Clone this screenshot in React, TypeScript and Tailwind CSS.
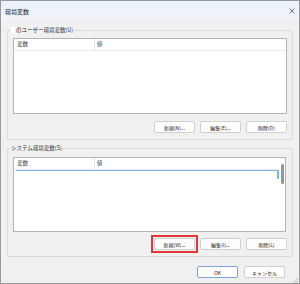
import React from "react";

const font = { fontFamily: '"Noto Sans CJK JP", "Noto Sans", sans-serif' };

function Btn({ label, focus, primary }: { label: string; focus?: boolean; primary?: boolean }) {
  const button = (
    <button
      className={
        "w-[41px] h-[12px] rounded-[2px] bg-[#fdfdfd] border text-[5px] leading-none text-[#222] flex items-center justify-center " +
        (primary ? "border-[#7fa6d6]" : "border-[#d0d0d0]")
      }
    >
      {label}
    </button>
  );
  if (!focus) return button;
  // red highlight frame around the button
  return <span className="-m-[3px] p-[1px] border-2 border-[#e2383a] flex">{button}</span>;
}

function ListHeader() {
  return (
    <div className="h-[12px] flex items-center border-b border-[#e8e8e8] text-[5.5px] text-[#333] shrink-0">
      <div className="w-[81px] pl-[3px] border-r border-[#e5e5e5] h-full flex items-center">変数</div>
      <div className="pl-[2px]">値</div>
    </div>
  );
}

function Group({
  legend,
  masked,
  children,
}: {
  legend: string;
  masked?: boolean;
  children: React.ReactNode;
}) {
  return (
    <fieldset className="border border-[#dcdcdc] px-[5px] pb-[6px] rounded-[1px]">
      <legend className="-ml-[3px] px-[1px] h-[10px] leading-[10px] text-[5.5px] text-[#333] flex items-center">
        {masked && <span className="inline-block w-[4px] h-[7px] bg-white mr-[1px]" />}
        {legend}
      </legend>
      {children}
    </fieldset>
  );
}

export default function App() {
  return (
    <div className="w-[300px] h-[284px] bg-[#f0f0f0] border border-[#9a9a9a] flex flex-col" style={font}>
      {/* Title bar */}
      <div className="h-[20px] bg-gradient-to-b from-[#eaf1fa] to-[#f1f4f8] flex items-center justify-between pl-[4px] pr-[4px] shrink-0">
        <span className="text-[6px] text-[#222]">環境変数</span>
        <svg width="6" height="6" viewBox="0 0 6 6">
          <path d="M0.5 0.5L5.5 5.5M5.5 0.5L0.5 5.5" stroke="#555" strokeWidth="0.8" />
        </svg>
      </div>

      <div className="flex flex-col px-[6px]">
        {/* User variables */}
        <div className="mt-[4px]">
          <Group legend="のユーザー環境変数(U)" masked>
            <div className="mt-[3px] h-[76px] bg-white border border-[#b4b4b4] flex flex-col">
              <ListHeader />
            </div>
            <div className="mt-[7px] flex justify-end gap-[5px]">
              <Btn label="新規(N)..." />
              <Btn label="編集(E)..." />
              <Btn label="削除(D)" />
            </div>
          </Group>
        </div>

        {/* System variables */}
        <div className="mt-[3px]">
          <Group legend="システム環境変数(S)">
            <div className="mt-[4px] h-[75px] bg-white border border-[#b4b4b4] flex mr-[1px]">
              <div className="flex-1 flex flex-col">
                <ListHeader />
                <div className="ml-[2px] h-[9px] border-t border-r-2 border-[#7ab7ef]" />
              </div>
              <div className="w-[6px] shrink-0">
                <div className="ml-[2px] mt-[6px] w-[3px] h-[20px] rounded-full bg-[#959595]" />
              </div>
            </div>
            <div className="mt-[6px] flex justify-end gap-[5px]">
              <Btn label="新規(W)..." focus />
              <Btn label="編集(I)..." />
              <Btn label="削除(L)" />
            </div>
          </Group>
        </div>

        {/* Dialog buttons */}
        <div className="mt-[9px] flex justify-end gap-[6px] pr-[8px]">
          <Btn label="OK" primary />
          <Btn label="キャンセル" />
        </div>
      </div>

      <div className="flex-1 flex items-end justify-end pr-[1px] pb-[1px]">
        <svg width="6" height="6" viewBox="0 0 6 6">
          <rect x="4.5" y="0.5" width="1" height="1" fill="#9a9a9a" />
          <rect x="2.5" y="2.5" width="1" height="1" fill="#9a9a9a" />
          <rect x="4.5" y="2.5" width="1" height="1" fill="#9a9a9a" />
          <rect x="0.5" y="4.5" width="1" height="1" fill="#9a9a9a" />
          <rect x="2.5" y="4.5" width="1" height="1" fill="#9a9a9a" />
          <rect x="4.5" y="4.5" width="1" height="1" fill="#9a9a9a" />
        </svg>
      </div>
    </div>
  );
}
